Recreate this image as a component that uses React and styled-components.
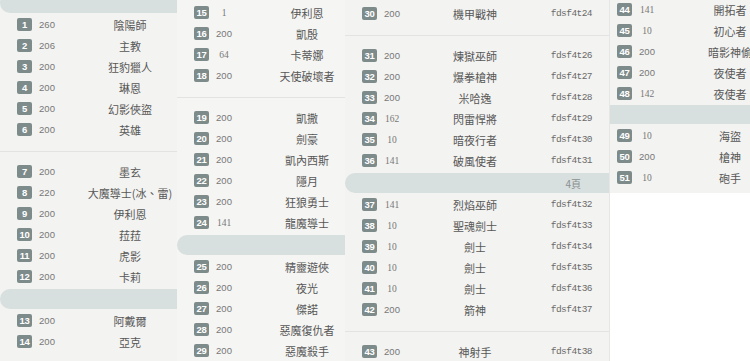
import React from "react";
import styled, { createGlobalStyle } from "styled-components";

const GlobalStyle = createGlobalStyle`
  html, body {
    margin: 0;
    padding: 0;
    background: #ffffff;
  }
`;

const Board = styled.div`
  display: flex;
  align-items: flex-start;
  width: 750px;
  height: 361px;
  overflow: hidden;
  background: #ffffff;
`;

const Panel = styled.div`
  display: flex;
  flex-direction: column;
  flex: none;
  width: ${(p) => p.$width}px;
  height: ${(p) => p.$height || 361}px;
  overflow: hidden;
  background: ${(p) => p.$bg || "#f3f3f1"};
  border-right: ${(p) => (p.$edge ? "1px solid #e6e6e4" : "none")};
  box-sizing: border-box;

  & > :first-child {
    margin-top: ${(p) => p.$shift || 0}px;
  }
`;

const PageBar = styled.div`
  display: flex;
  align-items: center;
  justify-content: flex-end;
  flex: none;
  height: ${(p) => (p.$tight ? 19 : 20)}px;
  margin: ${(p) => (p.$tight ? "1px 0 1px" : "2px 0 1px")};
  padding-right: 28px;
  background: #d8dfdf;
  border-radius: ${(p) => (p.$flat ? "0" : "10px 0 0 10px")};
  font-family: "Noto Sans CJK TC", "Liberation Sans", sans-serif;
  font-size: 10px;
  color: #8a9090;
`;

const Divider = styled.div`
  flex: none;
  height: 11px;
  margin-bottom: 9px;
  border-bottom: 1px solid #e3e3e1;
`;

const Row = styled.div`
  display: flex;
  align-items: center;
  flex: none;
  height: 21px;
  padding-left: ${(p) => p.$inset}px;
  padding-right: 17px;
`;

const Badge = styled.span`
  display: flex;
  align-items: center;
  justify-content: center;
  flex: none;
  width: 15px;
  height: 13px;
  border-radius: 2px;
  background: #7e8b8b;
  color: #ffffff;
  font-family: "Liberation Sans", Arial, sans-serif;
  font-weight: bold;
  font-size: 9.5px;
  letter-spacing: -0.3px;
`;

const Score = styled.span`
  flex: none;
  width: 20px;
  margin-left: 5px;
  text-align: center;
  font-family: ${(p) =>
    p.$serif ? '"Liberation Serif", serif' : '"Liberation Sans", Arial, sans-serif'};
  font-size: 9.5px;
  color: #777777;
`;

const Name = styled.span`
  flex: none;
  width: 102px;
  margin-left: 22px;
  text-align: center;
  white-space: nowrap;
  font-family: "Noto Sans CJK TC", "Liberation Sans", sans-serif;
  font-size: 11px;
  color: #575757;
`;

const Code = styled.span`
  margin-left: auto;
  font-family: "Liberation Mono", monospace;
  font-size: 9.5px;
  letter-spacing: -0.55px;
  color: #6a6a6a;
`;

const panels = [
  {
    width: 177,
    shift: -7,
    items: [
      { bar: true },
      [1, "260", "陰陽師"],
      [2, "206", "主教"],
      [3, "200", "狂豹獵人"],
      [4, "200", "琳恩"],
      [5, "200", "幻影俠盜"],
      [6, "200", "英雄"],
      { divider: true },
      [7, "200", "墨玄"],
      [8, "220", "大魔導士(冰、雷)"],
      [9, "200", "伊利恩"],
      [10, "200", "菈菈"],
      [11, "200", "虎影"],
      [12, "200", "卡莉"],
      { bar: true },
      [13, "200", "阿戴爾"],
      [14, "200", "亞克"],
    ],
  },
  {
    width: 168,
    shift: 2,
    bg: "#f5f5f3",
    items: [
      [15, "1", "伊利恩"],
      [16, "200", "凱殷"],
      [17, "64", "卡蒂娜"],
      [18, "200", "天使破壞者"],
      { divider: true },
      [19, "200", "凱撒"],
      [20, "200", "劍豪"],
      [21, "200", "凱內西斯"],
      [22, "200", "隱月"],
      [23, "200", "狂狼勇士"],
      [24, "141", "龍魔導士"],
      { bar: true },
      [25, "200", "精靈遊俠"],
      [26, "200", "夜光"],
      [27, "200", "傑諾"],
      [28, "200", "惡魔復仇者"],
      [29, "200", "惡魔殺手"],
    ],
  },
  {
    width: 265,
    shift: 3,
    edge: true,
    items: [
      [30, "200", "機甲戰神", "fdsf4t24"],
      { divider: true },
      [31, "200", "煉獄巫師", "fdsf4t26"],
      [32, "200", "爆拳槍神", "fdsf4t27"],
      [33, "200", "米哈逸", "fdsf4t28"],
      [34, "162", "閃雷悍將", "fdsf4t29"],
      [35, "10", "暗夜行者", "fdsf4t30"],
      [36, "141", "破風使者", "fdsf4t31"],
      { bar: true, label: "4頁" },
      [37, "141", "烈焰巫師", "fdsf4t32"],
      [38, "10", "聖魂劍士", "fdsf4t33"],
      [39, "10", "劍士", "fdsf4t34"],
      [40, "10", "劍士", "fdsf4t35"],
      [41, "10", "劍士", "fdsf4t36"],
      [42, "200", "箭神", "fdsf4t37"],
      { divider: true },
      [43, "200", "神射手", "fdsf4t38"],
    ],
  },
  {
    width: 140,
    height: 193,
    shift: -1,
    inset: 7,
    flatBar: true,
    items: [
      [44, "141", "開拓者"],
      [45, "10", "初心者"],
      [46, "200", "暗影神偷"],
      [47, "200", "夜使者"],
      [48, "142", "夜使者"],
      { bar: true, tight: true },
      [49, "10", "海盜"],
      [50, "200", "槍神"],
      [51, "10", "砲手"],
    ],
  },
];

const App = () => {
  return (
    <>
      <GlobalStyle />
      <Board>
        {panels.map((panel, pi) => (
          <Panel
            key={pi}
            $width={panel.width}
            $height={panel.height}
            $shift={panel.shift}
            $bg={panel.bg}
            $edge={panel.edge}
          >
            {panel.items.map((item, i) => {
              if (item.divider) return <Divider key={i} />;
              if (item.bar)
                return (
                  <PageBar key={i} $flat={panel.flatBar} $tight={item.tight}>
                    {item.label}
                  </PageBar>
                );
              const [no, score, name, code] = item;
              return (
                <Row key={i} $inset={panel.inset || 17}>
                  <Badge>{no}</Badge>
                  {/* 非 2 開頭的數值在原圖是點陣襯線字 */}
                  <Score $serif={!score.startsWith("2")}>{score}</Score>
                  <Name>{name}</Name>
                  {code && <Code>{code}</Code>}
                </Row>
              );
            })}
          </Panel>
        ))}
      </Board>
    </>
  );
};

export default App;
